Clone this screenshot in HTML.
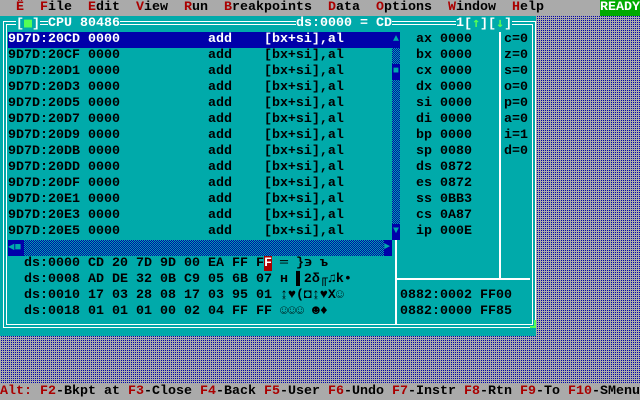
<!DOCTYPE html>
<html><head><meta charset="utf-8"><style>
*{margin:0;padding:0;box-sizing:border-box}
body{width:640px;height:400px;overflow:hidden;background:#aaa;position:relative;font-family:"Liberation Mono","DejaVu Sans Mono",monospace;font-weight:bold;font-size:13.33px;line-height:16px;color:#000}
.t{position:absolute;white-space:pre;height:16px}
.r{color:#aa0000}
.w{color:#fff}
.g{color:#55ff55;font-family:"DejaVu Sans Mono",monospace}
.dith{background:conic-gradient(#0000aa 0 25%,#aaaaaa 0) 0 0/2px 2px}
.dithc{background:conic-gradient(#0000aa 0 25%,#00aaaa 0 50%,#0000aa 0 75%,#00aaaa 0) 0 0/2px 2px}
.b{position:absolute}
</style></head><body>
<div class="b dith" style="left:0;top:16px;width:640px;height:368px"></div>
<div class="t" style="left:0;top:0;width:640px;background:#aaa">  <span class="r">Ë</span>  <span class="r">F</span>ile  <span class="r">E</span>dit  <span class="r">V</span>iew  <span class="r">R</span>un  <span class="r">B</span>reakpoints  <span class="r">D</span>ata  <span class="r">O</span>ptions  <span class="r">W</span>indow  <span class="r">H</span>elp</div>
<div class="t w" style="left:600px;top:0;width:40px;background:#00aa00">READY</div>
<div class="b" style="left:0;top:16px;width:536px;height:320px;background:#00aaaa"></div>
<div class="b" style="left:3px;top:21px;width:533px;height:307px;border:4px double #fff"></div>
<div class="b" style="left:530px;top:320px;width:6px;height:8px;border-right:2px solid #55ff55;border-bottom:2px solid #55ff55"></div>
<!-- title -->
<div class="t w" style="left:16px;top:16px;background:#00aaaa">[<span class="g">■</span>]</div>
<div class="t w" style="left:48px;top:16px;background:#00aaaa">CPU 80486</div>
<div class="t w" style="left:296px;top:16px;background:#00aaaa">ds:0000 = CD</div>
<div class="t w" style="left:456px;top:16px;background:#00aaaa">1</div>
<div class="t w" style="left:464px;top:16px;width:48px;background:#00aaaa">[<span class="g">↑</span>][<span class="g">↓</span>]</div>
<!-- lines -->
<div class="b" style="left:395px;top:240px;width:2px;height:84px;background:#fff"></div>
<div class="b" style="left:499px;top:32px;width:2px;height:248px;background:#fff"></div>
<div class="b" style="left:396px;top:278px;width:134px;height:2px;background:#fff"></div>
<!-- code -->
<div class="t w" style="left:8px;top:32px;width:384px;background:#0000aa">9D7D:20CD 0000           add    [bx+si],al</div>
<div class="t" style="left:8px;top:48px">9D7D:20CF 0000           add    [bx+si],al
9D7D:20D1 0000           add    [bx+si],al
9D7D:20D3 0000           add    [bx+si],al
9D7D:20D5 0000           add    [bx+si],al
9D7D:20D7 0000           add    [bx+si],al
9D7D:20D9 0000           add    [bx+si],al
9D7D:20DB 0000           add    [bx+si],al
9D7D:20DD 0000           add    [bx+si],al
9D7D:20DF 0000           add    [bx+si],al
9D7D:20E1 0000           add    [bx+si],al
9D7D:20E3 0000           add    [bx+si],al
9D7D:20E5 0000           add    [bx+si],al</div>
<!-- vscroll -->
<div class="b dithc" style="left:392px;top:48px;width:8px;height:176px"></div>
<div class="t" style="left:392px;top:32px;width:8px;background:#0000aa;color:#00aaaa;font-size:10px;text-align:center">▲</div>
<div class="t" style="left:392px;top:64px;width:8px;background:#0000aa;color:#00aaaa;font-size:10px;text-align:center">■</div>
<div class="t" style="left:392px;top:224px;width:8px;background:#0000aa;color:#00aaaa;font-size:10px;text-align:center">▼</div>
<!-- hscroll -->
<div class="b dithc" style="left:24px;top:240px;width:360px;height:16px"></div>
<div class="t" style="left:8px;top:240px;width:16px;background:#0000aa;color:#00aaaa;font-size:11px">◄■</div>
<div class="t" style="left:384px;top:240px;width:8px;background:#0000aa;color:#00aaaa;font-size:10px">►</div>
<!-- regs -->
<div class="t" style="left:416px;top:32px">ax 0000
bx 0000
cx 0000
dx 0000
si 0000
di 0000
bp 0000
sp 0080
ds 0872
es 0872
ss 0BB3
cs 0A87
ip 000E</div>
<div class="t" style="left:504px;top:32px">c=0
z=0
s=0
o=0
p=0
a=0
i=1
d=0</div>
<!-- data -->
<div class="t" style="left:24px;top:256px">ds:0000 CD 20 7D 9D 00 EA FF F<span style="background:#aa0000;color:#fff">F</span> ═ }϶ ъ
ds:0008 AD DE 32 0B C9 05 6B 07 н ▌2δ╓♫k•
ds:0010 17 03 28 08 17 03 95 01 ↨♥(◘↨♥X☺
ds:0018 01 01 01 00 02 04 FF FF ☺☺☺ ☻♦</div>
<div class="t" style="left:400px;top:288px">0882:0002 FF00
0882:0000 FF85</div>
<!-- status -->
<div class="t" style="left:0;top:384px;width:640px;background:#aaa"><span class="r">Alt:</span> <span class="r">F2</span>-Bkpt at <span class="r">F3</span>-Close <span class="r">F4</span>-Back <span class="r">F5</span>-User <span class="r">F6</span>-Undo <span class="r">F7</span>-Instr <span class="r">F8</span>-Rtn <span class="r">F9</span>-To <span class="r">F10</span>-SMenu</div>
</body></html>
